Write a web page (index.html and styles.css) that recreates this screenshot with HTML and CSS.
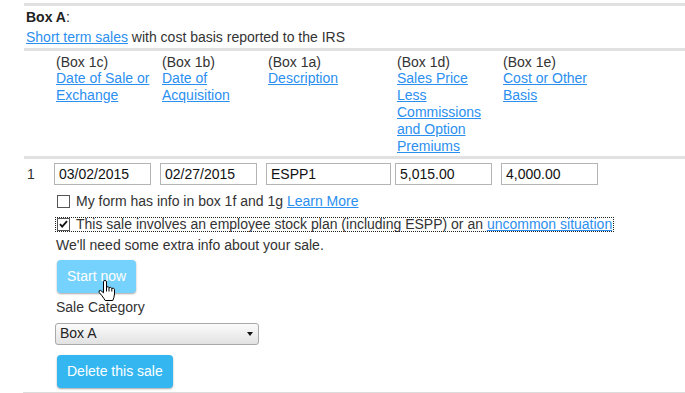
FILE: index.html
```html
<!DOCTYPE html>
<html>
<head>
<meta charset="utf-8">
<link rel="stylesheet" href="styles.css">
</head>
<body>
<div class="page">
  <div class="rule"></div>
  <div class="title"><b>Box A</b>:</div>
  <div class="subtitle"><a href="#">Short term sales</a> with cost basis reported to the IRS</div>
  <div class="rule"></div>
  <div class="grid head">
    <div></div>
    <div class="hcell">(Box 1c)<br><a href="#">Date of Sale or Exchange</a></div>
    <div class="hcell">(Box 1b)<br><a href="#">Date of Acquisition</a></div>
    <div class="hcell">(Box 1a)<br><a href="#">Description</a></div>
    <div class="hcell">(Box 1d)<br><a href="#">Sales Price Less Commissions and Option Premiums</a></div>
    <div class="hcell">(Box 1e)<br><a href="#">Cost or Other Basis</a></div>
  </div>
  <div class="rule"></div>
  <div class="grid entry">
    <div class="num">1</div>
    <div><div class="field">03/02/2015</div></div>
    <div><div class="field">02/27/2015</div></div>
    <div><div class="field wide">ESPP1</div></div>
    <div><div class="field">5,015.00</div></div>
    <div><div class="field">4,000.00</div></div>
  </div>
  <div class="details">
    <div class="check-row">
      <span class="cb"></span><span>My form has info in box 1f and 1g <a href="#">Learn More</a></span>
    </div>
    <div class="check-row focused">
      <span class="cb"><svg width="11" height="11" viewBox="0 0 11 11"><path d="M2 5.2 L4.2 7.6 L9 2.2" fill="none" stroke="#111" stroke-width="1.8"/></svg></span><span>This sale involves an employee stock plan (including ESPP) or an <a href="#">uncommon situation</a></span>
    </div>
    <div class="note">We'll need some extra info about your sale.</div>
    <div class="btn-wrap">
      <button class="btn light">Start now</button>
      <svg class="cursor" width="19" height="22" viewBox="0 0 19 22"><path d="M5.5 1.8 Q5.5 0.5 6.9 0.5 Q8.5 0.5 8.5 1.8 L8.5 7 Q10.6 6 11 7.8 Q13 6.6 13.8 8.4 Q16 7.4 16.5 9.4 L16.5 14 Q16.2 17.5 14.8 20.5 L7.2 20.5 Q6 18.5 4 15.8 L1.2 12.5 Q0.4 10.2 2.6 10.4 L5.5 12.8 Z" fill="#fff" stroke="#000" stroke-width="1"/><path d="M8.5 7 L8.5 11.5 M11 7.8 L11 11.5 M13.8 8.4 L13.8 11.5" fill="none" stroke="#000" stroke-width="1"/></svg>
    </div>
    <div class="label">Sale Category</div>
    <div class="select"><span>Box A</span><span class="arrow"></span></div>
    <button class="btn">Delete this sale</button>
  </div>
  <div class="bottom-rule"></div>
</div>
</body>
</html>
```

FILE: styles.css
```css
html, body {
  margin: 0;
  padding: 0;
  background: #fff;
}
body {
  font-family: "Liberation Sans", Arial, sans-serif;
  font-size: 14px;
  line-height: 1.2;
  color: #333;
}
a {
  color: #2b8ff0;
  text-decoration: underline;
}
.page {
  padding: 3px 0 0 24px;
}
.rule {
  height: 3px;
  background: #e1e1e1;
}
.title {
  padding: 3px 2px 0;
  margin-bottom: 3px;
  color: #333;
}
.title b {
  color: #222;
}
.subtitle {
  padding: 0 2px;
  margin-bottom: 2px;
}
.grid {
  display: grid;
  grid-template-columns: 30px 106px 106px 129px 106px 106px;
}
.head {
  padding: 3px 0 2px;
}
.hcell {
  padding: 0 6px 0 2px;
}
.entry {
  margin-top: 4px;
  align-items: center;
}
.num {
  padding-left: 3px;
  color: #333;
}
.field {
  box-sizing: border-box;
  width: 97px;
  height: 22px;
  border: 1px solid #b4b4b4;
  padding: 0 4px;
  line-height: 20px;
  color: #111;
  background: #fff;
}
.field.wide {
  width: 125px;
}
.details {
  padding-left: 32px;
  display: flex;
  flex-direction: column;
  align-items: flex-start;
}
.check-row {
  display: flex;
  align-items: center;
  margin-top: 8px;
  padding-left: 1px;
}
.check-row.focused {
  margin-top: 8px;
  height: 13px;
  line-height: 13px;
  outline: 1px dotted #222;
  padding-right: 1px;
}
.cb {
  box-sizing: border-box;
  width: 13px;
  height: 13px;
  border: 1px solid #555;
  background: #fff;
  margin-right: 6px;
  display: flex;
  align-items: center;
  justify-content: center;
  flex: none;
}
.cb svg {
  display: block;
}
.note {
  margin-top: 6px;
}
.btn-wrap {
  position: relative;
  margin-top: 6px;
}
.btn {
  display: block;
  border: none;
  border-radius: 4px;
  background: #34b7f1;
  color: #fff;
  font-family: "Liberation Sans", Arial, sans-serif;
  font-size: 14px;
  line-height: 17px;
  padding: 8px 10px;
  margin: 0 0 0 1px;
  box-shadow: 0 1px 2px rgba(0, 0, 0, 0.35);
}
.btn.light {
  background: #75d2fc;
}
.cursor {
  position: absolute;
  left: 42px;
  top: 20px;
}
.label {
  margin-top: 6px;
}
.select {
  box-sizing: border-box;
  margin-top: 7px;
  margin-left: -1px;
  width: 204px;
  height: 22px;
  border: 1px solid #a9a9a9;
  border-radius: 3px;
  background: linear-gradient(#fbfbfb, #e2e2e2);
  display: flex;
  align-items: center;
  justify-content: space-between;
  padding: 0 5px 0 4px;
  color: #222;
}
.arrow {
  width: 0;
  height: 0;
  border-left: 3.5px solid transparent;
  border-right: 3.5px solid transparent;
  border-top: 4px solid #111;
}
.details > .btn {
  margin-top: 10px;
}
.bottom-rule {
  margin-top: 4px;
  margin-left: -1px;
  height: 1px;
  background: #dcdcdc;
}
```
